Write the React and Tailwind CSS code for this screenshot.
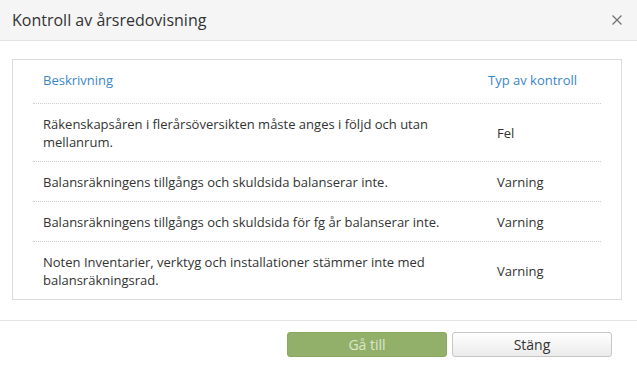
/**
 * Kontroll av årsredovisning — validation dialog
 */

const rows = [
  { text: 'Räkenskapsåren i flerårsöversikten måste anges i följd och utan mellanrum.', type: 'Fel' },
  { text: 'Balansräkningens tillgångs och skuldsida balanserar inte.', type: 'Varning' },
  { text: 'Balansräkningens tillgångs och skuldsida för fg år balanserar inte.', type: 'Varning' },
  { text: 'Noten Inventarier, verktyg och installationer stämmer inte med balansräkningsrad.', type: 'Varning' },
];

/* ─── Header ─────────────────────────────────────────────────────────────── */
const Header = () => (
  <div className="h-[41px] bg-[#f5f5f5] border-b border-[#e3e3e3] flex items-center justify-between pl-[12px] pr-[15px]">
    <h1 className="text-[16px] text-[#333] leading-[20px] -mt-[1px]">Kontroll av årsredovisning</h1>
    <button className="w-[10px] h-[10px] flex items-center justify-center -mt-[1px]">
      <svg width="10" height="10" viewBox="0 0 10 10" fill="none" stroke="#707070" strokeWidth="1.2">
        <path d="M0.5 0.5 L9.5 9.5 M9.5 0.5 L0.5 9.5" />
      </svg>
    </button>
  </div>
);

/* ─── Table panel ────────────────────────────────────────────────────────── */
const Panel = () => (
  <div className="ml-[12px] mr-[15px] mt-[18px] border border-[#dcdcdc] px-[20px]">
    <div className="flex text-[13px] leading-[18px] text-[#3a86c8] pt-[11px] pb-[14px]">
      <div className="w-[445px] pl-[10px]">Beskrivning</div>
      <div className="flex-1 pl-[10px]">Typ av kontroll</div>
    </div>
    {rows.map((r, i) => (
      <div key={i} className="flex items-center border-t border-dotted border-[#cfcfcf] text-[13px] leading-[18px] text-[#333] pt-[11px] pb-[10px]">
        <div className="w-[445px] pl-[10px] pr-[10px]">{r.text}</div>
        <div className="flex-1 pl-[19px]">{r.type}</div>
      </div>
    ))}
  </div>
);

/* ─── Footer ─────────────────────────────────────────────────────────────── */
const Footer = () => (
  <div className="mt-[20px] border-t border-[#e5e5e5] flex justify-end gap-[5px] pt-[11px] pr-[25px]">
    <button className="w-[160px] h-[25px] rounded-[3px] bg-[#93b06a] border border-[#8aa862] text-[14px] text-[#dbe6cc] leading-[20px]">
      Gå till
    </button>
    <button className="w-[160px] h-[25px] rounded-[3px] bg-gradient-to-b from-white to-[#ebebeb] border border-[#c6c6c6] text-[14px] text-[#333] leading-[20px]">
      Stäng
    </button>
  </div>
);

export default function App() {
  return (
    <div className="w-[637px] h-[365px] bg-white overflow-hidden" style={{ fontFamily: '"Open Sans", "Liberation Sans", sans-serif' }}>
      <Header />
      <Panel />
      <Footer />
    </div>
  );
}
